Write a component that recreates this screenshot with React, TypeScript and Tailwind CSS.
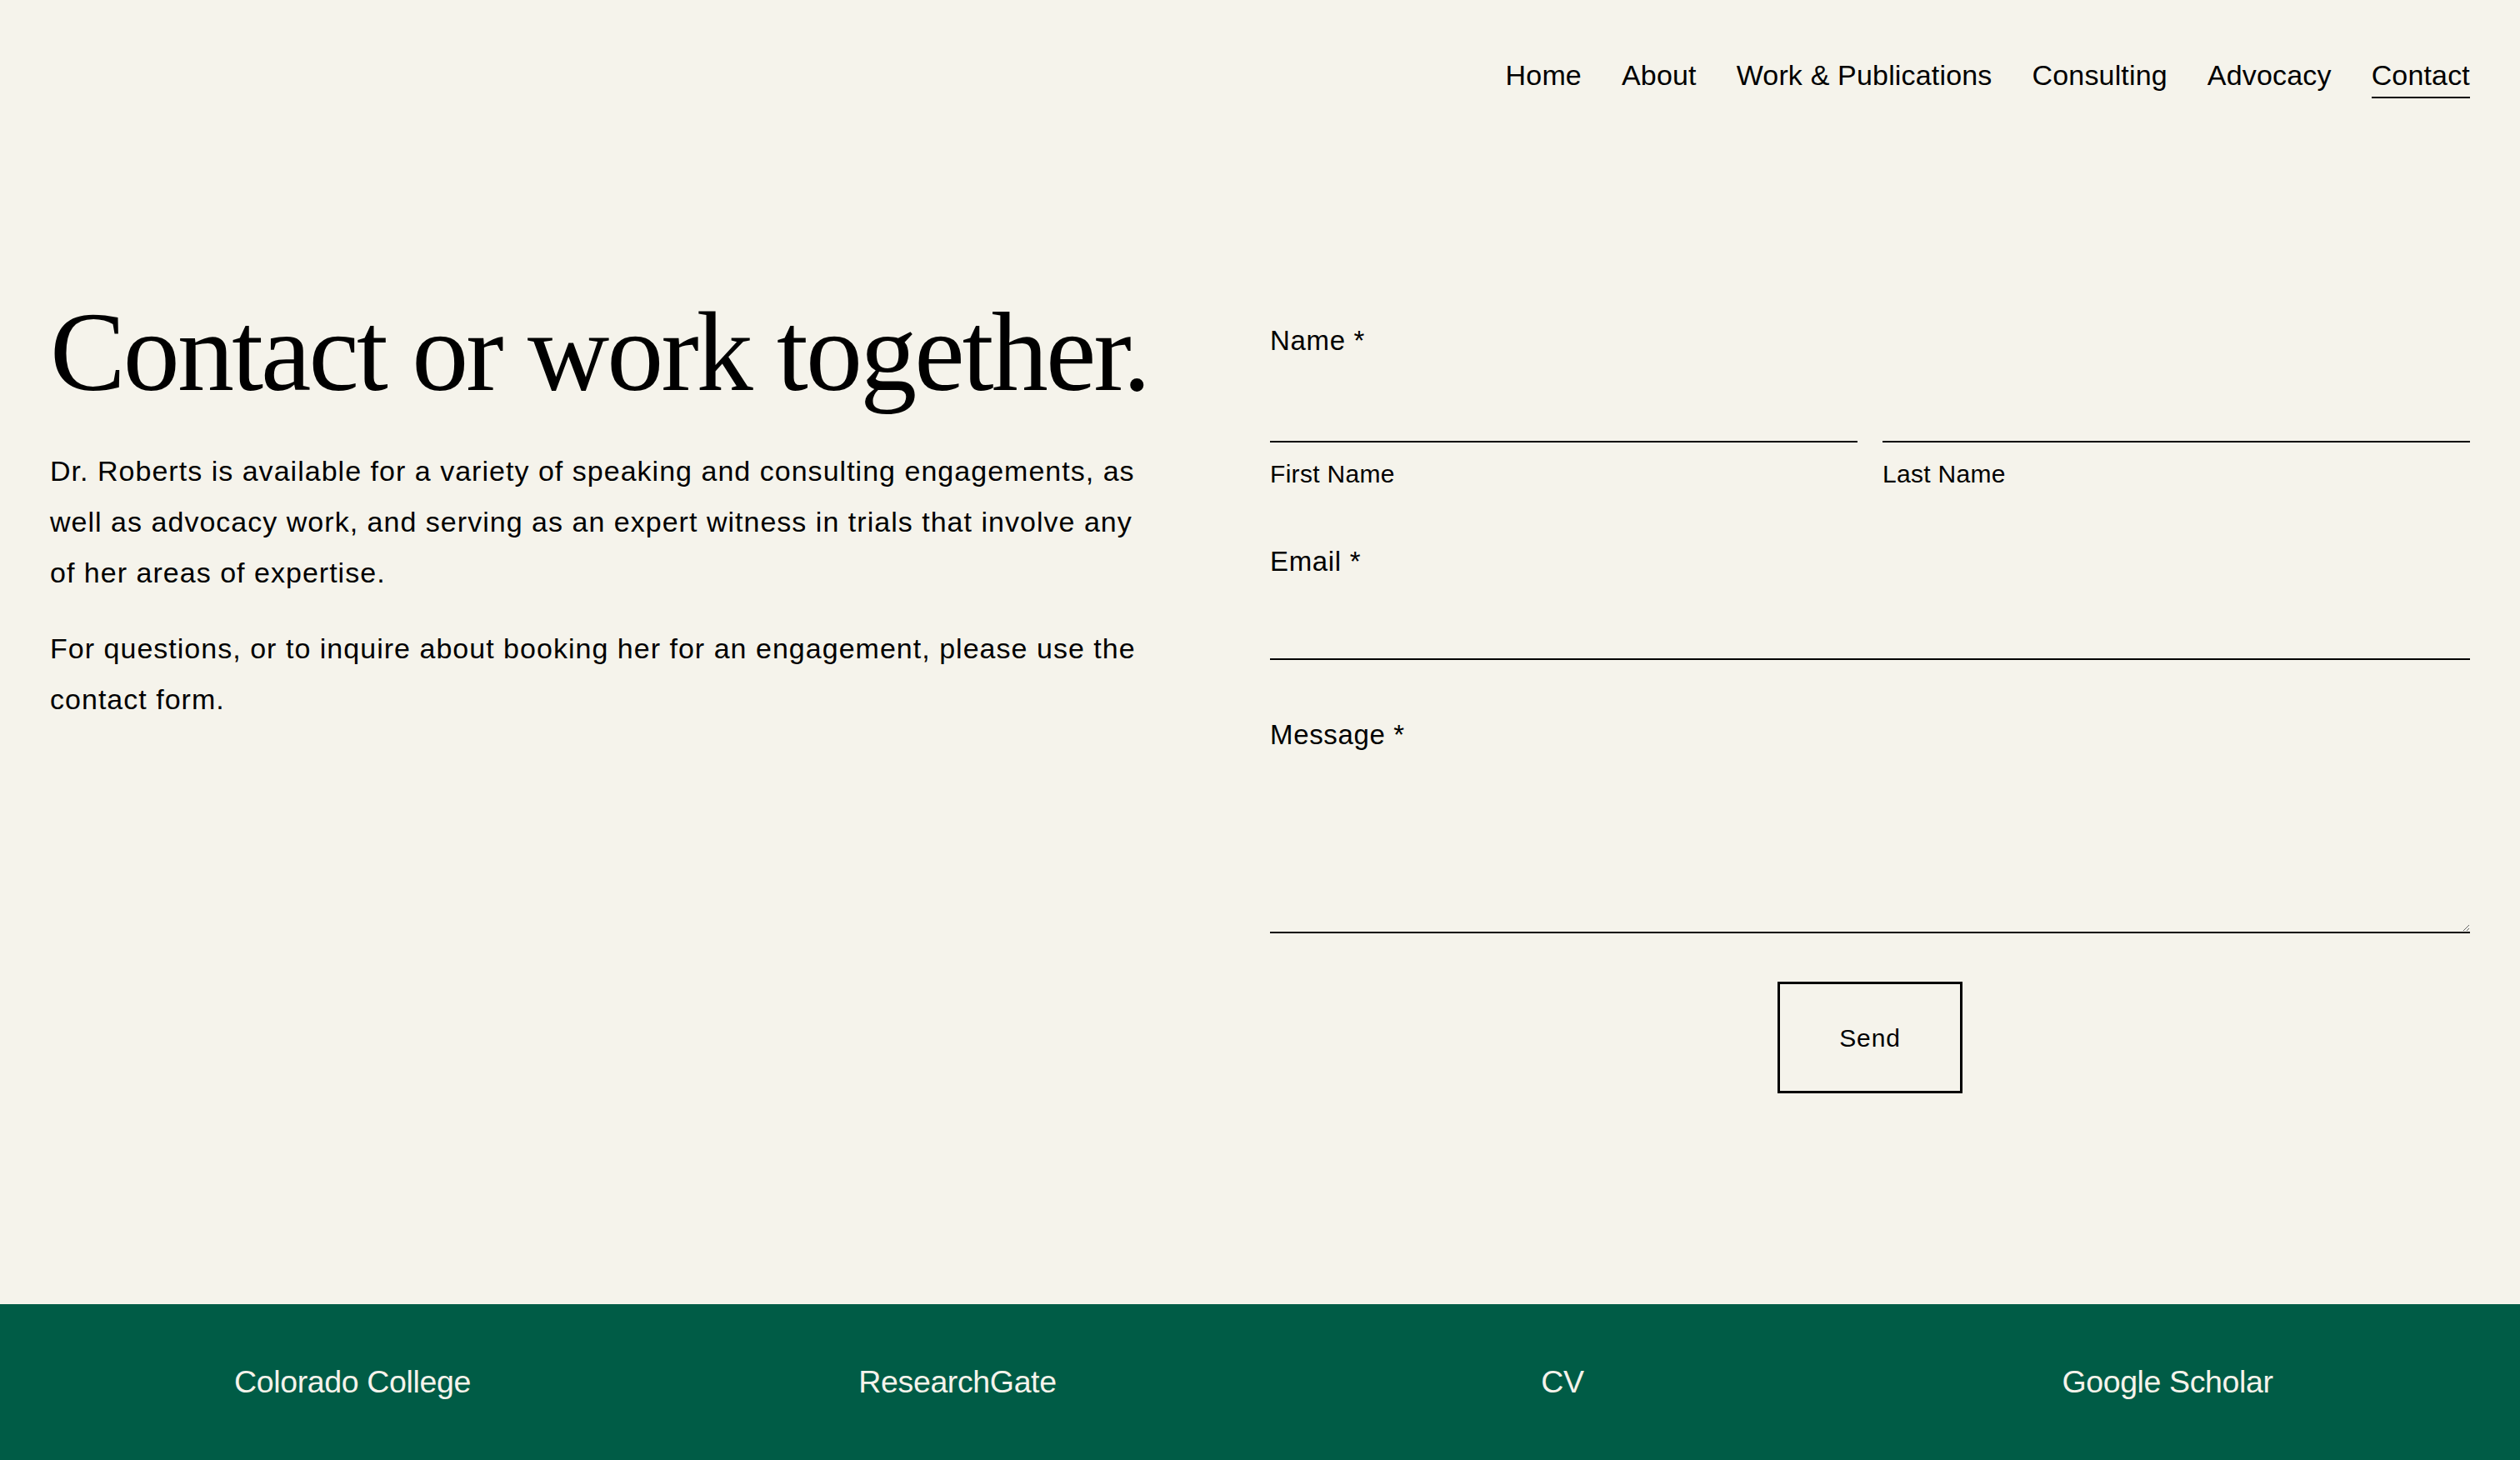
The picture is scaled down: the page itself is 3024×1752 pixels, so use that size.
const navItems = ["Home", "About", "Work & Publications", "Consulting", "Advocacy", "Contact"];
const footerLinks = ["Colorado College", "ResearchGate", "CV", "Google Scholar"];

const sans = "font-['Liberation_Sans',Arial,sans-serif]";

export default function App() {
  return (
    <div className={`min-h-[1752px] bg-[#f5f3eb] text-black flex flex-col ${sans}`}>
      <header className="flex justify-end px-[60px] pt-[65px]">
        <nav className="flex gap-[48px] text-[34px] leading-[51px] tracking-[0.005em]">
          {navItems.map((item) => (
            <a
              key={item}
              href="#"
              className={item === "Contact" ? "border-b-2 border-black" : ""}
            >
              {item}
            </a>
          ))}
        </nav>
      </header>

      <main className="flex-1 flex justify-between px-[60px] pt-[230px]">
        <section className="w-[1320px]">
          <h1 className="font-['Liberation_Serif','Times_New_Roman',serif] text-[136px] leading-[1.1] tracking-[-0.021em] whitespace-nowrap">
            Contact or work together.
          </h1>
          <p className="mt-[37px] text-[34px] leading-[61px] tracking-[0.03em]">
            Dr. Roberts is available for a variety of speaking and consulting engagements, as well as advocacy work,
            and serving as an expert witness in trials that involve any of her areas of expertise.
          </p>
          <p className="mt-[30px] text-[34px] leading-[61px] tracking-[0.03em]">
            For questions, or to inquire about booking her for an engagement, please use the contact form.
          </p>
        </section>

        <form className="w-[1440px] pt-[37px]" onSubmit={(e) => e.preventDefault()}>
          <label className="block text-[33px] leading-[48px] tracking-[0.02em]">Name *</label>
          <div className="flex gap-[30px]">
            <div className="flex-1">
              <input className="block w-full h-[98px] bg-transparent border-b-2 border-black outline-none text-[32px]" />
              <span className="block mt-[15px] text-[30px] leading-[45px] tracking-[0.01em]">First Name</span>
            </div>
            <div className="flex-1">
              <input className="block w-full h-[98px] bg-transparent border-b-2 border-black outline-none text-[32px]" />
              <span className="block mt-[15px] text-[30px] leading-[45px] tracking-[0.01em]">Last Name</span>
            </div>
          </div>

          <label className="block mt-[59px] text-[33px] leading-[48px] tracking-[0.02em]">Email *</label>
          <input className="block w-full h-[94px] bg-transparent border-b-2 border-black outline-none text-[32px]" />

          <label className="block mt-[66px] text-[33px] leading-[48px] tracking-[0.02em]">Message *</label>
          <textarea className="block w-full h-[214px] bg-transparent border-b-2 border-black outline-none resize-y text-[32px]" />

          <div className="flex justify-center mt-[58px]">
            <button
              type="submit"
              className="w-[222px] h-[134px] border-[3px] border-black text-[30px] font-medium tracking-[0.03em]"
            >
              Send
            </button>
          </div>
        </form>
      </main>

      <footer className="h-[187px] bg-[#005c46] px-[60px] grid grid-cols-4 items-center">
        {footerLinks.map((link) => (
          <a key={link} href="#" className="text-center text-[37.5px] tracking-[-0.01em] text-[#f5f3eb]">
            {link}
          </a>
        ))}
      </footer>
    </div>
  );
}
